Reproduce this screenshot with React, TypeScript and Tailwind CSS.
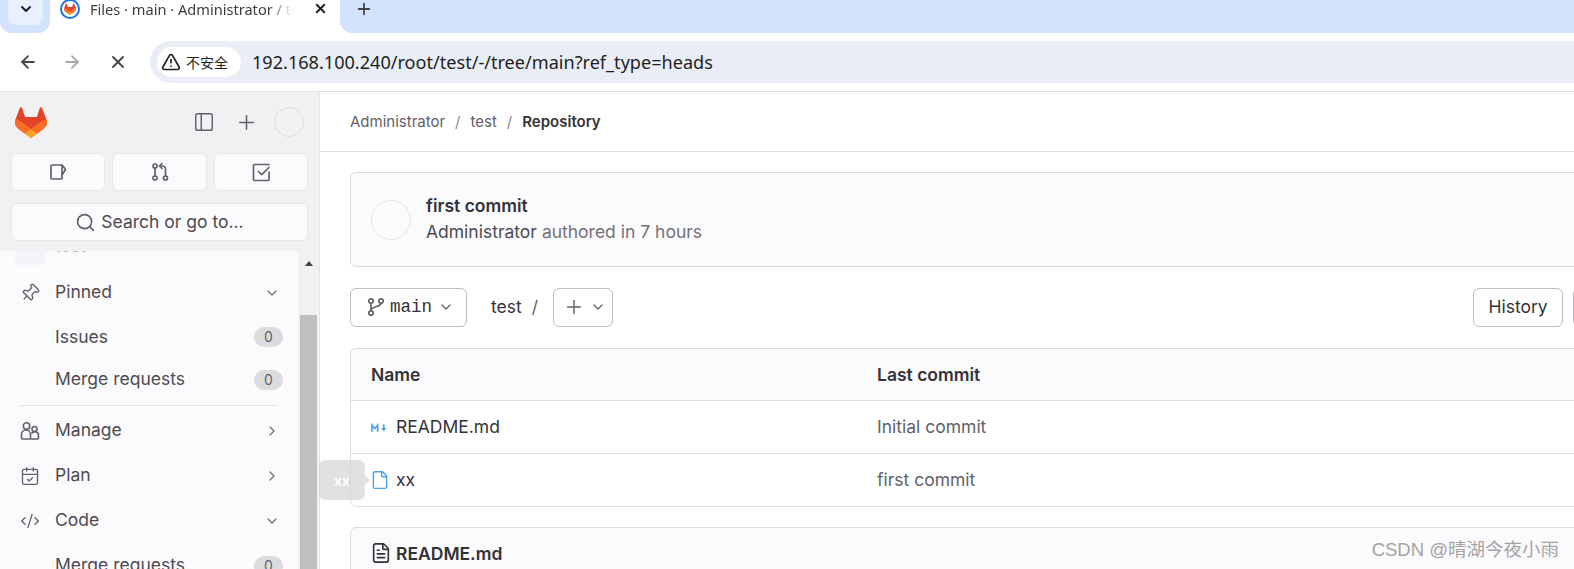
import React from 'react';
import {
    ArrowLeft,
    ArrowRight,
    X,
    Plus,
    TriangleAlert,
    ChevronDown,
    ChevronRight,
    Search,
    Pin,
    CalendarCheck,
    CodeXml,
    PanelLeft,
    File,
    FileText,
} from 'lucide-react';

// --- Logo ---
const Tanuki: React.FC<{ className?: string }> = ({ className }) => (
    <svg viewBox="0 0 25 24" className={className}>
        <path fill="#E24329" d="m24.507 9.5-.034-.09L21.082.562a.896.896 0 0 0-1.694.091l-2.29 7.01H7.825L5.535.653a.898.898 0 0 0-1.694-.09L.451 9.411.416 9.5a6.297 6.297 0 0 0 2.09 7.278l.012.01.03.022 5.16 3.867 2.56 1.935 1.554 1.176a1.051 1.051 0 0 0 1.268 0l1.555-1.176 2.56-1.935 5.197-3.89.014-.01A6.297 6.297 0 0 0 24.507 9.5Z" />
        <path fill="#FC6D26" d="m24.507 9.5-.034-.09a11.44 11.44 0 0 0-4.56 2.051l-7.447 5.632 4.742 3.584 5.197-3.89.014-.01A6.297 6.297 0 0 0 24.507 9.5Z" />
        <path fill="#FCA326" d="m7.707 20.677 2.56 1.935 1.555 1.176a1.051 1.051 0 0 0 1.268 0l1.555-1.176 2.56-1.935-4.743-3.584-4.755 3.584Z" />
        <path fill="#FC6D26" d="M5.01 11.461a11.43 11.43 0 0 0-4.56-2.05L.416 9.5a6.297 6.297 0 0 0 2.09 7.278l.012.01.03.022 5.16 3.867 4.745-3.584-7.444-5.632Z" />
    </svg>
);

// --- Small custom icons ---
const IssueIcon = () => (
    <svg viewBox="0 0 20 20" className="w-5 h-5 text-[#626168]" fill="none" stroke="currentColor" strokeWidth="1.7" strokeLinejoin="round">
        <path d="M3 4c0-.6.4-1 1-1h10.2l3.3 4.5-3.5 5.5v3c0 .6-.4 1-1 1H4c-.6 0-1-.4-1-1V4Z" />
        <path d="M14 3.2V13" />
    </svg>
);

const MergeIcon = () => (
    <svg viewBox="0 0 20 20" className="w-5 h-5 text-[#626168]" fill="none" stroke="currentColor" strokeWidth="1.7" strokeLinecap="round" strokeLinejoin="round">
        <circle cx="5" cy="4" r="2" />
        <circle cx="5" cy="16" r="2" />
        <circle cx="15.5" cy="16" r="2" />
        <path d="M5 6v8" />
        <path d="M15.5 14V7a3 3 0 0 0-3-3H10" />
        <path d="M12 1.5 9.5 4 12 6.5" />
    </svg>
);

const TodoIcon = () => (
    <svg viewBox="0 0 20 20" className="w-5 h-5 text-[#626168]" fill="none" stroke="currentColor" strokeWidth="1.7" strokeLinecap="round" strokeLinejoin="round">
        <path d="M18 2.5H3.5a1 1 0 0 0-1 1v14a1 1 0 0 0 1 1h13.5a1 1 0 0 0 1-1V10" />
        <path d="m7.5 9.5 3.2 3.2L18 5.5" />
    </svg>
);

const ManageIcon = () => (
    <svg viewBox="0 0 20 20" className="w-5 h-5 text-[#626168]" fill="none" stroke="currentColor" strokeWidth="1.6" strokeLinejoin="round">
        <circle cx="6.5" cy="5" r="3.2" />
        <circle cx="14.5" cy="8" r="2.5" />
        <path d="M1.5 17v-3.5a4.5 4.5 0 0 1 9 0V17c0 .6-.4 1-1 1h-7c-.6 0-1-.4-1-1Z" />
        <path d="M10.5 18h7.2c.5 0 .8-.4.8-1v-2.5a3.7 3.7 0 0 0-7-1.8" />
    </svg>
);

const BranchIcon = () => (
    <svg viewBox="0 0 20 20" className="w-5 h-5 text-[#626168]" fill="none" stroke="currentColor" strokeWidth="1.7">
        <circle cx="5" cy="4" r="2.2" />
        <circle cx="15" cy="4" r="2.2" />
        <circle cx="5" cy="16" r="2.2" />
        <path d="M5 6.2v7.6" />
        <path d="M15 6.2c0 4-10 3-10 7" />
    </svg>
);

const MarkdownIcon = () => (
    <svg viewBox="0 0 18 10" className="w-[17px] h-[10px] text-[#4aa3ee]" fill="none" stroke="currentColor" strokeWidth="1.8">
        <path d="M1 9V2l3 3.5L7 2v7" />
        <path d="M13.5 1v6" />
        <path d="M10.5 5h6l-3 3.5Z" fill="currentColor" stroke="none" />
    </svg>
);

// --- Browser chrome ---
const BrowserChrome: React.FC = () => (
    <div className="shrink-0 [font-family:'Noto_Sans',sans-serif]">
        <div className="h-[33px] bg-white flex items-stretch overflow-hidden">
            <div className="w-[50px] bg-[#d3e3fd] rounded-br-[12px] rounded-bl-[12px] pl-[8px]">
                <div className="w-[35px] h-[25px] pb-[8px] rounded-b-lg bg-[#e9f0fd] flex items-center justify-center">
                    <ChevronDown className="w-4 h-4 text-[#1f1f1f]" strokeWidth={3} />
                </div>
            </div>
            <div className="w-[290px] flex items-center pl-[10px] pb-[16px]">
                <div className="w-5 h-5 rounded-full border-2 border-[#1a73e8] flex items-center justify-center shrink-0">
                    <Tanuki className="w-3 h-3" />
                </div>
                <span className="ml-[10px] w-[203px] whitespace-nowrap overflow-hidden text-[14.6px] leading-5 text-[#3c3c3f] [mask-image:linear-gradient(to_right,black_88%,transparent)]">Files · main · Administrator / test</span>
                <X className="ml-[20px] w-[15px] h-[15px] text-[#1f1f1f]" strokeWidth={3} />
            </div>
            <div className="flex-1 bg-[#d3e3fd] rounded-bl-[12px] pl-[15px]">
                <Plus className="w-[18px] h-[18px] text-[#444]" strokeWidth={2.4} />
            </div>
        </div>
        <div className="h-[59px] bg-white border-b border-[#e0e0e0] flex items-center">
            <ArrowLeft className="ml-[18px] w-[20px] h-[20px] text-[#444746]" strokeWidth={2.2} />
            <ArrowRight className="ml-[24px] w-[20px] h-[20px] text-[#a8a8a8]" strokeWidth={2.2} />
            <X className="ml-[26px] w-[20px] h-[20px] text-[#444746]" strokeWidth={2.2} />
            <div className="ml-[22px] flex-1 h-[42px] rounded-l-full bg-[#e9eef6] flex items-center pl-[7px]">
                <div className="w-[84px] h-[30px] rounded-full bg-white flex items-center pl-[4px]">
                    <TriangleAlert className="w-[20px] h-[20px] text-[#1f1f1f]" strokeWidth={2} />
                    <span className="ml-[5px] text-[14px] text-[#1f1f1f] [font-family:'Noto_Sans_CJK_SC',sans-serif]">不安全</span>
                </div>
                <span className="ml-[11px] pt-[2px] text-[18.1px] text-[#1f1f1f] whitespace-nowrap">192.168.100.240/root/test/-/tree/main?ref_type=heads</span>
            </div>
        </div>
    </div>
);

// --- Sidebar ---
const NavRow: React.FC<{ icon?: React.ReactNode; name: string; chevron?: 'down' | 'right'; count?: number; className: string }> = ({ icon, name, chevron, count, className }) => (
    <div className={`flex items-center shrink-0 ${className}`}>
        <span className="w-[55px] pl-[20px] shrink-0">{icon}</span>
        <span className="flex-1 text-[17.5px] text-[#4c4b51]">{name}</span>
        {chevron === 'down' && <ChevronDown className="w-4 h-4 mr-[18px] text-[#737278]" />}
        {chevron === 'right' && <ChevronRight className="w-4 h-4 mr-[18px] text-[#737278]" />}
        {count !== undefined && (
            <span className="w-[29px] h-5 mr-[15px] rounded-full bg-[#dcdcde] text-[14px] leading-5 text-center text-[#626168]">{count}</span>
        )}
    </div>
);

const navIcon = 'w-5 h-5 text-[#626168]';
const quickButton = 'h-[38px] rounded-md border border-[#e9e9ec] bg-[#fbfafd] flex items-center justify-center';

const Sidebar: React.FC = () => (
    <aside className="w-[320px] shrink-0 h-full border-r border-[#e4e4e6] bg-[#f1f1f3] flex flex-col overflow-hidden">
        <div className="h-[159px] shrink-0 pl-[11px] pt-[15px]">
            <div className="flex items-center h-[30px]">
                <Tanuki className="ml-[4px] w-[32px] h-[31px]" />
                <PanelLeft className="ml-[146px] w-[22px] h-[22px] text-[#626168]" strokeWidth={1.6} />
                <Plus className="ml-[20px] w-[23px] h-[23px] text-[#626168]" strokeWidth={1.6} />
                <div className="ml-[16px] w-[30px] h-[30px] rounded-full border border-[#dcdcde]" />
            </div>
            <div className="mt-[16px] flex gap-[7px] w-[297px]">
                <div className={`w-[94px] ${quickButton}`}><IssueIcon /></div>
                <div className={`w-[95px] ${quickButton}`}><MergeIcon /></div>
                <div className={`w-[94px] ${quickButton}`}><TodoIcon /></div>
            </div>
            <div className="mt-[12px] w-[297px] h-[38px] rounded-md border border-[#e9e9ec] bg-[#fbfafd] flex items-center justify-center text-[17.5px] text-[#4c4b51]">
                <Search className="w-[21px] h-[21px] mr-[5px] text-[#626168]" strokeWidth={1.8} />
                Search or go to...
            </div>
        </div>
        <div className="flex-1 flex min-h-0">
            <div className="w-[298px] bg-[#fbfafd] flex flex-col overflow-hidden">
                {/* Item scrolled mostly out of view */}
                <div className="h-[14px] shrink-0 overflow-hidden">
                    <div className="-mt-[16px] flex items-center pl-[15px]">
                        <div className="w-[30px] h-[30px] rounded-md bg-[#f6f4fb]" />
                        <span className="ml-[10px] mb-[14px] text-[17.5px] leading-[22px] text-[#b5b5b9]">test</span>
                    </div>
                </div>
                <NavRow className="h-[45px] mt-[5px] mb-[1px]" name="Pinned" chevron="down" icon={<Pin className={`${navIcon} rotate-45`} strokeWidth={1.6} />} />
                <NavRow className="h-[42px]" name="Issues" count={0} />
                <NavRow className="h-[43px]" name="Merge requests" count={0} />
                <div className="mx-[20px] mt-[4px] mb-[2px] h-px bg-[#e4e4e6] shrink-0" />
                <NavRow className="h-[45px]" name="Manage" chevron="right" icon={<ManageIcon />} />
                <NavRow className="h-[45px]" name="Plan" chevron="right" icon={<CalendarCheck className={navIcon} strokeWidth={1.6} />} />
                <NavRow className="h-[45px]" name="Code" chevron="down" icon={<CodeXml className={navIcon} strokeWidth={1.6} />} />
                <NavRow className="h-[45px]" name="Merge requests" count={0} />
            </div>
            <div className="flex-1 flex flex-col pl-[2px] pr-[2px]">
                <div className="h-[64px] pt-[10px] flex justify-center">
                    <div className="w-0 h-0 border-x-[4.5px] border-x-transparent border-b-[5px] border-b-[#404040]" />
                </div>
                <div className="flex-1 bg-[#bfbfbf]" />
            </div>
        </div>
    </aside>
);

// --- Main content ---
const FileRow: React.FC<{ icon: React.ReactNode; name: string; commit: string; className: string }> = ({ icon, name, commit, className }) => (
    <div className={`flex items-center text-[17.5px] ${className}`}>
        <div className="w-[526px] shrink-0 pl-[20px] flex items-center text-[#333238]">
            <span className="w-[25px] flex items-center">{icon}</span>
            {name}
        </div>
        <div className="text-[#626168]">{commit}</div>
    </div>
);

const toolbarButton = 'h-[39px] shrink-0 rounded-md border border-[#bfbfc3] flex items-center';

const MainContent: React.FC = () => (
    <main className="flex-1 min-w-0 h-full overflow-hidden bg-white">
        <div className="h-[60px] border-b border-[#dcdcde] flex items-center pl-[30px] pt-[2px] text-[15px] text-[#626168]">
            <span>Administrator</span>
            <span className="mx-[10px] text-[#89888d]">/</span>
            <span>test</span>
            <span className="mx-[10px] text-[#89888d]">/</span>
            <span className="font-semibold text-[#333238]">Repository</span>
        </div>
        <div className="pl-[30px] w-[1400px]">
            <div className="mt-[20px] h-[95px] w-[1300px] rounded-md border border-[#dcdcde] bg-[#fbfafd] flex items-center pl-[20px]">
                <div className="w-10 h-10 rounded-full border border-[#e4e4e6]" />
                <div className="ml-[15px] pb-[2px]">
                    <div className="text-[17.5px] leading-[26px] font-semibold text-[#333238]">first commit</div>
                    <div className="text-[17.5px] leading-[26px] text-[#737278]"><span className="text-[#4c4b51]">Administrator</span> authored in 7 hours</div>
                </div>
            </div>
            <div className="mt-[20px] h-[40px] flex items-center">
                <div className={`w-[117px] pl-[15px] ${toolbarButton}`}>
                    <BranchIcon />
                    <span className="ml-[4px] text-[17.5px] text-[#333238] [font-family:'Liberation_Mono',monospace]">main</span>
                    <ChevronDown className="ml-[6px] w-4 h-4 text-[#626168]" />
                </div>
                <span className="ml-[24px] text-[17.5px] text-[#333238]">test</span>
                <span className="ml-[10px] text-[17.5px] text-[#626168]">/</span>
                <div className={`ml-[15px] w-[60px] pl-[9px] ${toolbarButton}`}>
                    <Plus className="w-[22px] h-[22px] text-[#626168]" strokeWidth={1.6} />
                    <ChevronDown className="ml-[5px] w-4 h-4 text-[#626168]" />
                </div>
                <div className={`ml-[860px] w-[90px] justify-center text-[17.5px] text-[#333238] ${toolbarButton}`}>History</div>
                <div className={`ml-[10px] w-[40px] ${toolbarButton}`} />
            </div>
            <div className="mt-[21px] w-[1300px] rounded-md border border-[#dcdcde]">
                <div className="h-[52px] pt-[2px] flex items-center bg-[#fbfafd] border-b border-[#dcdcde] text-[17.5px] font-semibold text-[#333238] rounded-t-md">
                    <div className="w-[526px] shrink-0 pl-[20px]">Name</div>
                    <div>Last commit</div>
                </div>
                <FileRow className="h-[53px] pt-[1px] border-b border-[#dcdcde]" icon={<MarkdownIcon />} name="README.md" commit="Initial commit" />
                <FileRow className="h-[52px]" icon={<File className="w-5 h-5 -ml-[1px] text-[#4aa3ee]" strokeWidth={1.7} />} name="xx" commit="first commit" />
            </div>
            <div className="mt-[20px] w-[1300px] h-[60px] rounded-t-md border border-[#dcdcde] bg-[#fbfafd] flex items-start pl-[20px] pt-[13px] text-[17.5px] font-semibold text-[#333238]">
                <FileText className="w-[22px] h-[22px] mt-[1px] mr-[4px] -ml-[1px] text-[#333238]" strokeWidth={1.8} />
                README.md
            </div>
        </div>
    </main>
);

export default function App() {
    return (
        <div className="relative w-[1574px] h-[569px] overflow-hidden flex flex-col bg-white [font-family:Inter,sans-serif]">
            <BrowserChrome />
            <div className="flex-1 flex min-h-0">
                <Sidebar />
                <MainContent />
            </div>
            {/* Tooltip over the file row */}
            <div className="absolute left-[319px] top-[460px] w-[46px] h-[40px] rounded-md bg-[#d4d4d4]/70 flex items-center justify-center text-[14px] font-semibold text-white">
                xx
                <span className="absolute right-[-5px] top-[15px] w-0 h-0 border-y-[5px] border-y-transparent border-l-[5px] border-l-[#d4d4d4]/70" />
            </div>
            {/* Watermark */}
            <div className="absolute right-[15px] top-[538px] text-[18.5px] leading-6 text-[#a4a4a4] whitespace-nowrap [font-family:'Liberation_Sans','Noto_Sans_CJK_SC',sans-serif]">CSDN @晴湖今夜小雨</div>
        </div>
    );
}
